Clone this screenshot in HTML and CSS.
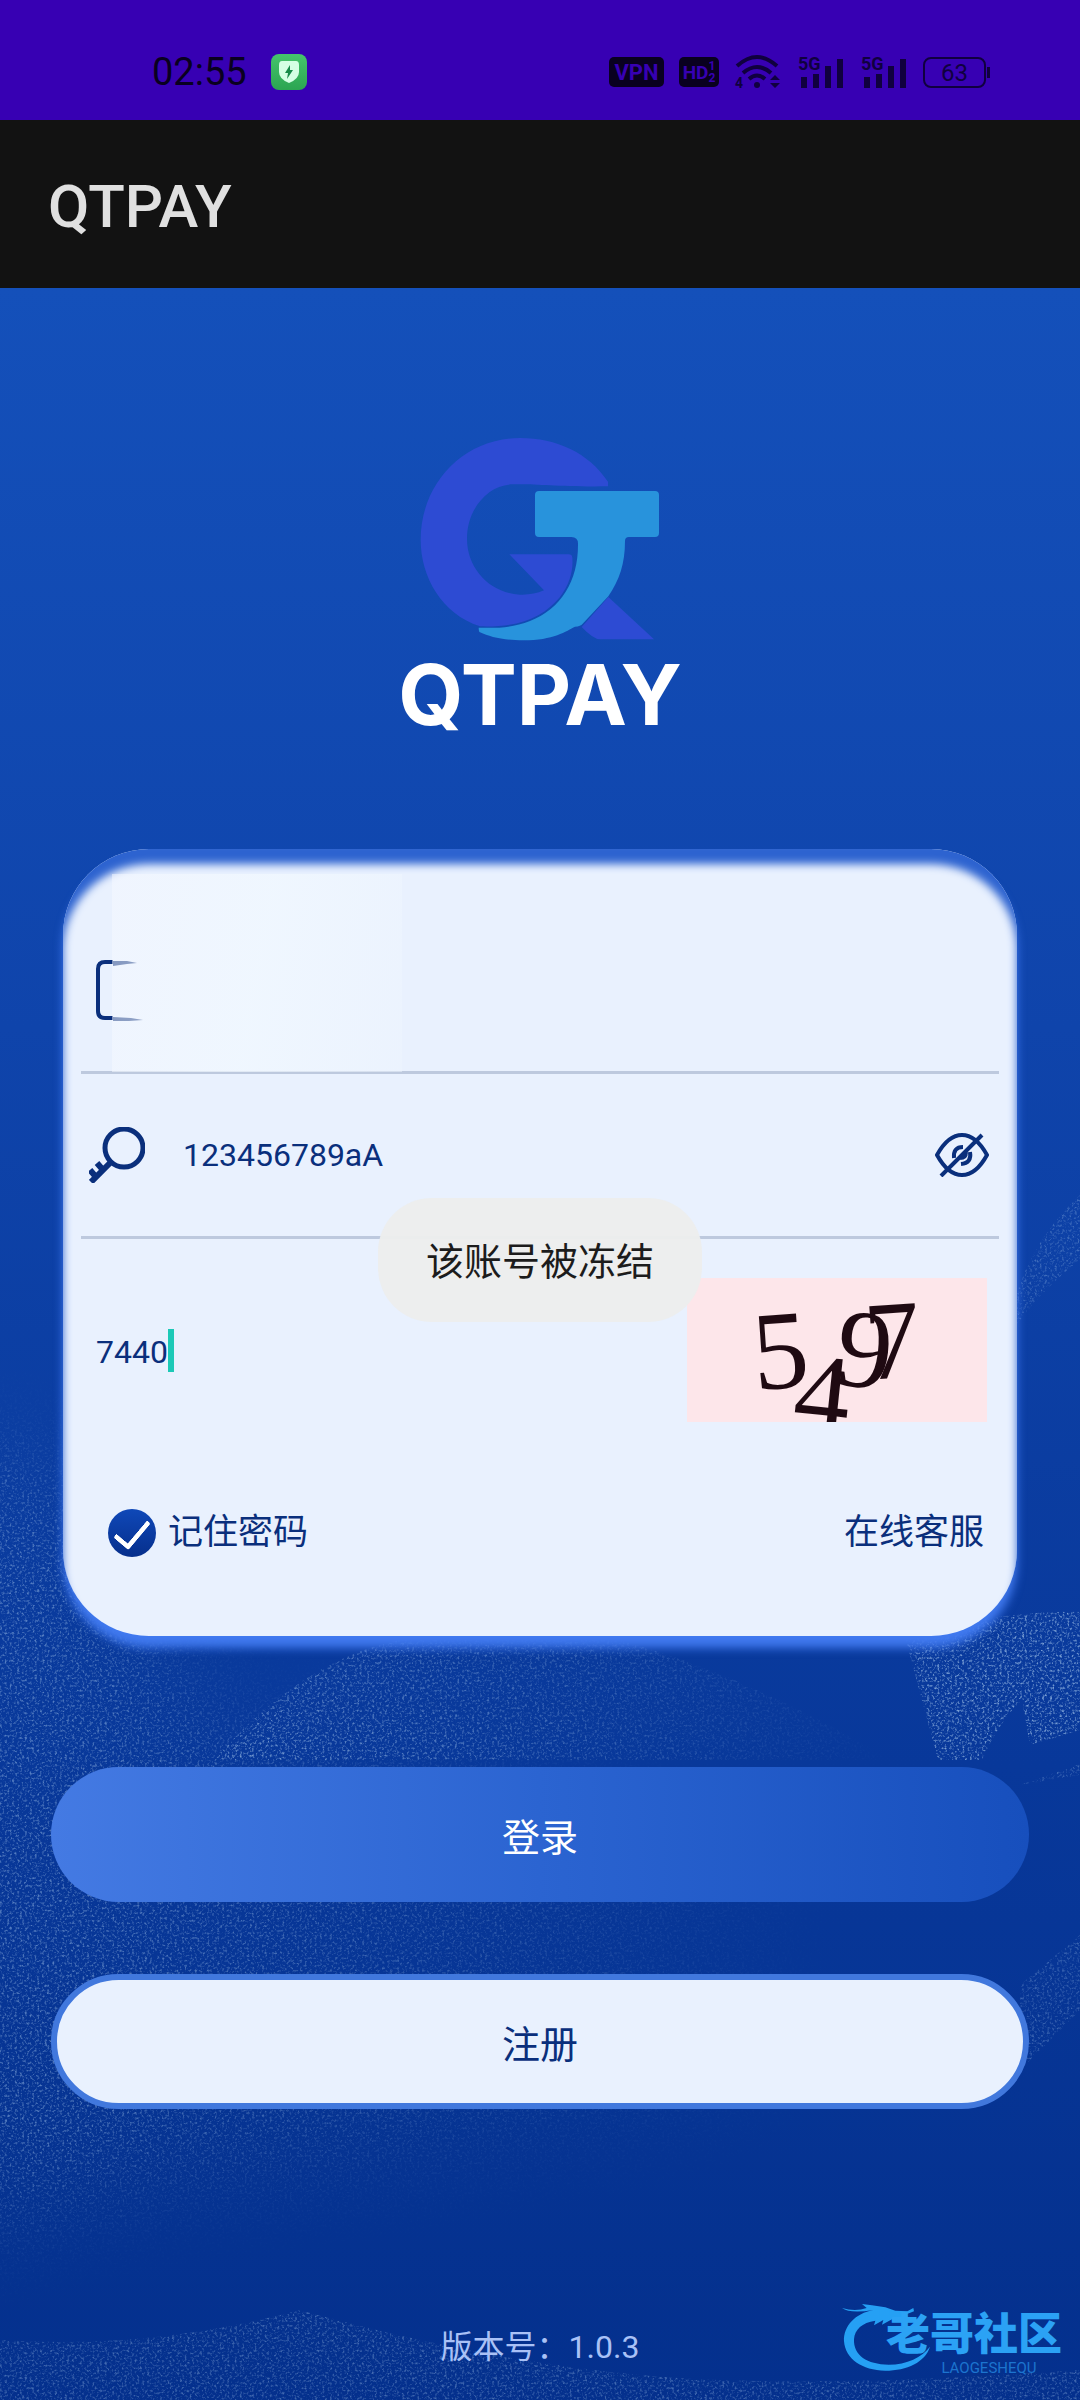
FILE: index.html
```html
<!DOCTYPE html>
<html lang="zh-CN">
<head>
    <meta charset="UTF-8">
    <meta name="viewport" content="width=device-width, initial-scale=1.0">
    <title>QTPAY</title>
    <link rel="stylesheet" href="styles.css">
</head>
<body>
    <div class="statusbar">
        <div class="status-left">
            <span class="clock">02:55</span>
            <svg width="36" height="36" viewBox="0 0 36 36">
                <defs>
                    <linearGradient id="green" x1="0" y1="0" x2="0" y2="1">
                        <stop offset="0" stop-color="#45c46c"/>
                        <stop offset="1" stop-color="#2ba551"/>
                    </linearGradient>
                </defs>
                <rect width="36" height="36" rx="8" fill="url(#green)"/>
                <path d="M11 7H25Q28 7 28 11V18Q28 25 18 29Q8 25 8 18V11Q8 7 11 7Z" fill="#d4ffe4"/>
                <path d="M19 11L14 19H17L16 25L22 16H19Z" fill="#168a49"/>
            </svg>
        </div>
        <div class="status-right">
            <span class="tag vpn">VPN</span>
            <span class="tag hd">HD<span class="hd-num"><span>1</span><span>2</span></span></span>
            <svg width="48" height="34" viewBox="0 0 48 34" fill="none" stroke="#10003f" stroke-width="4">
                <path d="M3 11Q23 -7 43 11"/>
                <path d="M9 18Q23 6 37 18"/>
                <path d="M15 24Q23 17 31 24"/>
                <circle cx="23" cy="30" r="3" fill="#10003f" stroke="none"/>
                <path d="M36 25L41 20L46 25ZM36 28L41 33L46 28Z" fill="#10003f" stroke="none"/>
                <text class="tiny" x="1" y="33">4</text>
            </svg>
            <svg width="48" height="34" viewBox="0 0 48 34" fill="#10003f">
                <path d="M4 22H10V33H4ZM16 19H22V33H16ZM28 11H34V33H28ZM40 4H46V33H40Z"/>
                <text class="gen" x="1" y="15">5G</text>
            </svg>
            <svg width="48" height="34" viewBox="0 0 48 34" fill="#10003f">
                <path d="M4 22H10V33H4ZM16 19H22V33H16ZM28 11H34V33H28ZM40 4H46V33H40Z"/>
                <text class="gen" x="1" y="15">5G</text>
            </svg>
            <span class="battery">63</span>
        </div>
    </div>

    <header class="appbar">
        <h1>QTPAY</h1>
    </header>

    <main class="page">
        <!-- speckled shapes behind the form -->
        <svg class="grain" viewBox="0 288 1080 2112" preserveAspectRatio="xMidYMid slice" aria-hidden="true">
            <defs>
                <filter id="speckle" x="-5%" y="-5%" width="110%" height="110%">
                    <feTurbulence type="fractalNoise" baseFrequency="0.4" numOctaves="3" seed="4" result="noise"/>
                    <feColorMatrix in="noise" type="matrix" values="0 0 0 0 0.45  0 0 0 0 0.65  0 0 0 0 0.88  3 0 0 0 -1.5" result="dots"/>
                    <feComposite in="dots" in2="SourceGraphic" operator="in"/>
                </filter>
                <filter id="soft" x="-20%" y="-20%" width="140%" height="140%">
                    <feGaussianBlur stdDeviation="45"/>
                </filter>
                <linearGradient id="fadeRight" x1="0" y1="0" x2="1" y2="0">
                    <stop offset="0" stop-color="#fff" stop-opacity=".5"/>
                    <stop offset=".5" stop-color="#fff" stop-opacity=".3"/>
                    <stop offset="1" stop-color="#fff" stop-opacity="0"/>
                </linearGradient>
            </defs>
            <g filter="url(#speckle)">
                <path filter="url(#soft)" d="M-60 1440L60 1480L200 1720L500 1780L800 1860L800 2100Q500 2130 300 2160Q120 2170 -60 2230Z" fill="url(#fadeRight)"/>
                <path d="M215 1760Q300 1660 400 1640H620Q760 1680 890 1760Z" fill="url(#fadeRight)"/>
                <path d="M905 1636Q1000 1610 1080 1612V1730L1030 1745L1022 1700Q1000 1720 982 1760H938Z" fill="#fff" fill-opacity=".65"/>
                <path d="M1080 1195Q1020 1250 1005 1340Q1040 1290 1080 1260Z" fill="#fff" fill-opacity=".3"/>
                <path d="M1080 1764L1020 1785L1080 1775ZM1080 1935L1020 1985V2070L1080 2010Z" fill="#fff" fill-opacity=".3"/>
                <path d="M300 2310Q480 2360 640 2375T1080 2370V2400H0V2340Q150 2350 300 2310Z" fill="#fff" fill-opacity=".35"/>
            </g>
        </svg>

        <div class="brand">
            <svg class="brand-mark" viewBox="120 50 720 612" aria-hidden="true">
                <path d="M684 184C625 97 530 53 420 53C250 53 122 190 122 358C122 470 185 580 300 618C420 622 490 590 540 530C570 490 580 450 577 412Q576 402 566 402H388L492 510C470 520 445 524 420 523C330 518 261 445 261 355C261 265 325 192 400 192C470 190 530 200 684 198Z" fill="#2d4bd3"/>
                <path d="M685 530L822 657H660Q640 657 605 620Z" fill="#2d4bd3"/>
                <path d="M477 212H825Q837 212 837 224V338Q837 350 825 350H747Q735 350 735 362C735 430 718 480 685 528L608 610Q602 618 585 619C560 632 520 660 430 660C370 660 330 650 300 636Q296 634 296 622C350 624 400 622 450 602C545 565 595 480 594 370Q594 350 574 350H477Q465 350 465 338V224Q465 212 477 212Z" fill="#2893dc"/>
            </svg>
            <div class="brand-name">QTPAY</div>
        </div>

        <form class="card">
            <div class="row">
                <svg width="56" height="62" viewBox="0 0 56 62" fill="none" stroke="#0a2f7c" stroke-width="4">
                    <path d="M24 3H16Q9 3 9 10V52Q9 59 16 59H24"/>
                    <path d="M24 2H38L48 4L38 5L24 7ZM24 58L42 59L54 61L40 62H24Z" fill="#0a2f7c" stroke="none"/>
                </svg>
                <input class="field" type="tel" aria-label="手机号">
                <div class="smudge"></div>
            </div>
            <div class="row">
                <svg width="56" height="56" viewBox="0 0 56 56" fill="none" stroke="#0a2f7c" stroke-width="5">
                    <circle cx="35" cy="21" r="19"/>
                    <path d="M22 35L2 55M14 43L8 36M7 50L1 43" stroke-width="6"/>
                </svg>
                <input class="field" type="text" value="123456789aA" aria-label="密码">
                <button class="eye" type="button" aria-label="显示密码">
                    <svg width="54" height="44" viewBox="0 0 54 44" fill="none" stroke="#0a2f7c" stroke-width="4">
                        <path d="M2 22Q13 2 27 2T52 22Q41 42 27 42T2 22Z"/>
                        <path d="M19 25Q18 14 28 14M35 19Q37 30 26 31"/>
                        <path d="M27 22L33 19Q33 27 25 27Z" fill="#0a2f7c" stroke="none"/>
                        <path d="M6 43L47 2"/>
                    </svg>
                </button>
            </div>
            <div class="code-row">
                <div class="code">
                    <input class="code-input" type="text" value="7440" maxlength="4" aria-label="验证码">
                    <span class="caret"></span>
                </div>
                <button class="captcha" type="button" aria-label="刷新验证码">
                    <svg width="300" height="144" viewBox="0 0 300 144">
                        <text x="68" y="112" transform="rotate(-4 68 112)">5</text>
                        <text x="104" y="150" transform="rotate(6 104 150)">4</text>
                        <text x="146" y="106" transform="rotate(6 146 106)">9</text>
                        <text x="180" y="102" transform="rotate(-4 180 102)">7</text>
                    </svg>
                </button>
            </div>
            <div class="options">
                <label class="remember"><input type="checkbox" checked>记住密码</label>
                <a class="service" href="#">在线客服</a>
            </div>
            <div class="toast" role="status">该账号被冻结</div>
        </form>

        <div class="actions">
            <button class="btn login" type="button">登录</button>
            <button class="btn register" type="button">注册</button>
        </div>

        <div class="version">版本号：1.0.3</div>

        <div class="watermark">
            <svg width="92" height="70" viewBox="0 0 276 210" aria-hidden="true">
                <path d="M94 24C40 34 4 72 6 118C10 170 60 206 130 206C195 206 250 180 264 134C240 165 195 188 140 188C75 188 34 160 36 112C38 82 60 62 100 56L96 70L124 54L120 68L150 52L180 56L212 58L204 46L180 42L216 28L214 18L196 28L160 26L130 16L90 10L60 6L74 18Q40 30 0 18Q24 36 94 24Z" fill="#25a0f4"/>
            </svg>
            <div class="watermark-text">
                <b>老哥社区</b>
                <small>LAOGESHEQU</small>
            </div>
        </div>
    </main>
</body>
</html>
```

FILE: styles.css
```css
* {
    box-sizing: border-box;
}

body {
    margin: 0;
    min-height: 100vh;
    display: flex;
    flex-direction: column;
    font-family: Roboto, "Noto Sans CJK SC", sans-serif;
    color: #0a2f7c;
}

button, input {
    font-family: inherit;
    color: inherit;
    padding: 0;
    border: none;
    background: none;
}

svg {
    display: block;
    flex: none;
}

/* status bar */
.statusbar {
    height: 120px;
    padding: 24px 94px 0 152px;
    display: flex;
    align-items: center;
    justify-content: space-between;
    background: #3700b3;
    color: #10003f;
}

.statusbar svg {
    overflow: visible;
}

.status-left {
    display: flex;
    align-items: center;
    gap: 24px;
}

.clock {
    font-size: 38px;
    line-height: 40px;
    color: #090020;
}

.status-right {
    display: flex;
    align-items: center;
    gap: 15px;
}

.tag {
    display: flex;
    align-items: center;
    justify-content: center;
    height: 30px;
    border-radius: 5px;
    background: #090020;
    color: #3700b3;
    font-weight: 700;
}

.vpn {
    width: 55px;
    font-size: 22px;
}

.hd {
    width: 40px;
    font-size: 19px;
}

.hd-num {
    display: flex;
    flex-direction: column;
    font-size: 12px;
    line-height: 12px;
}

.gen {
    font-size: 18px;
    font-weight: 700;
}

.tiny {
    font-size: 14px;
    font-weight: 700;
    fill: #10003f;
    stroke: none;
}

.battery {
    position: relative;
    width: 63px;
    height: 31px;
    border: 2px solid #10003f;
    border-radius: 8px;
    font-size: 24px;
    line-height: 28px;
    text-align: center;
}

.battery::after {
    content: "";
    position: absolute;
    right: -6px;
    top: 8px;
    width: 3px;
    height: 11px;
    background: #10003f;
}

/* title bar */
.appbar {
    height: 168px;
    padding: 4px 48px 0;
    display: flex;
    align-items: center;
    background: #121212;
}

.appbar h1 {
    margin: 0;
    font-size: 60px;
    font-weight: 500;
    color: #e0e0e0;
}

.page {
    position: relative;
    flex: 1;
    display: flex;
    flex-direction: column;
    background: linear-gradient(#1450ba, #0f44ab 35%, #08389a 70%, #04308d);
}

.grain {
    position: absolute;
    top: 0;
    left: 0;
    width: 100%;
    height: 100%;
}

/* logo */
.brand {
    position: relative;
    padding-top: 149px;
    display: flex;
    flex-direction: column;
    align-items: center;
    gap: 12px;
}

.brand-mark {
    width: 240px;
}

.brand-name {
    font-family: Inter, "Liberation Sans", sans-serif;
    font-size: 84px;
    line-height: 84px;
    font-weight: 700;
    color: #fff;
}

/* form card */
.card {
    position: relative;
    margin: 112px 63px 0;
    padding: 60px 18px 79px;
    border-radius: 86px;
    background: #e9f1fe;
    box-shadow: inset 0 15px 8px #2d63d0, 0 12px 10px #4079ef;
}

.row {
    position: relative;
    height: 165px;
    padding: 0 10px 0 8px;
    display: flex;
    align-items: center;
    gap: 38px;
    border-bottom: 3px solid #bdc9de;
}

.field {
    flex: 1;
    min-width: 0;
    height: 80px;
    font-size: 32px;
}

.eye {
    cursor: pointer;
}

.smudge {
    position: absolute;
    left: 31px;
    top: -35px;
    width: 290px;
    height: 198px;
    background: linear-gradient(100deg, rgba(246, 249, 255, .5), rgba(242, 249, 255, .7) 50%, rgba(238, 245, 254, .5));
}

.code-row {
    margin-top: 39px;
    padding: 0 12px 0 15px;
    display: flex;
    justify-content: space-between;
    align-items: center;
}

.code {
    display: flex;
    align-items: center;
}

.code-input {
    width: 72px;
    height: 80px;
    padding-top: 4px;
    font-size: 32px;
}

.caret {
    width: 6px;
    height: 43px;
    background: #1cc9b7;
}

.captcha {
    background: #fde6ea;
    cursor: pointer;
}

.captcha text {
    font-family: "Liberation Serif", serif;
    font-size: 112px;
    fill: #1f0a12;
}

.options {
    margin-top: 87px;
    padding: 0 15px 0 27px;
    display: flex;
    justify-content: space-between;
    align-items: center;
    font-size: 35px;
    line-height: 48px;
}

.remember {
    display: flex;
    align-items: center;
    gap: 12px;
}

.remember input {
    appearance: none;
    width: 48px;
    height: 48px;
    margin: 0;
    border-radius: 50%;
    background: linear-gradient(#0f48b8, #062f8c);
    display: flex;
    justify-content: center;
}

.remember input:checked::before {
    content: "";
    width: 15px;
    height: 30px;
    margin-top: 4px;
    border: solid #fff;
    border-width: 0 5px 5px 0;
    border-radius: 3px;
    transform: rotate(40deg);
}

.service {
    color: inherit;
    text-decoration: none;
}

.toast {
    position: absolute;
    top: 349px;
    left: 50%;
    transform: translateX(-50%);
    padding: 36px 48px 32px;
    border-radius: 54px;
    background: rgba(236, 237, 237, .97);
    color: #1c1c1c;
    font-size: 38px;
    line-height: 56px;
    white-space: nowrap;
}

/* buttons */
.actions {
    position: relative;
    margin: 131px 51px 0;
    display: flex;
    flex-direction: column;
    gap: 72px;
}

.btn {
    height: 135px;
    border-radius: 68px;
    font-size: 38px;
    cursor: pointer;
}

.login {
    background: linear-gradient(90deg, #447ae3, #2b64d1 50%, #174fbd);
    color: #fff;
}

.register {
    border: 6px solid #4178dd;
    background: #e9f1fe;
}

.version {
    position: relative;
    margin-top: auto;
    padding-bottom: 29px;
    font-size: 32px;
    line-height: 48px;
    text-align: center;
    color: #a9c1f6;
}

.watermark {
    position: absolute;
    right: 18px;
    bottom: 24px;
    display: flex;
    color: #2ba2f5;
}

.watermark-text {
    display: flex;
    flex-direction: column;
    align-items: center;
    margin-left: -48px;
    padding-top: 8px;
}

.watermark b {
    font-size: 44px;
    line-height: 50px;
    font-weight: 900;
}

.watermark small {
    margin-left: 30px;
    font-size: 15px;
    line-height: 16px;
    color: #1c74cf;
}
```
